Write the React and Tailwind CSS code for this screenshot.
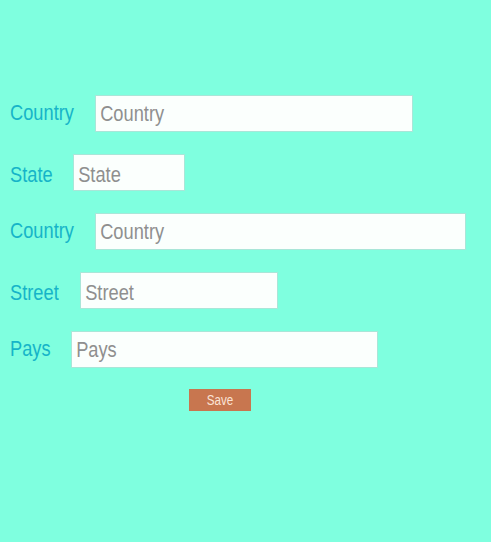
import React from "react";

const rows = [
  { label: "Country", lw: "w-[85px]", w: "w-[318px]", iw: "w-[381px]", lo: "", io: "" },
  { label: "State", lw: "w-[63px]", w: "w-[112px]", iw: "w-[133px]", lo: "translate-y-[3px]", io: "pt-[5px]" },
  { label: "Country", lw: "w-[85px]", w: "w-[371px]", iw: "w-[445px]", lo: "", io: "" },
  { label: "Street", lw: "w-[70px]", w: "w-[198px]", iw: "w-[236px]", lo: "translate-y-[3px]", io: "pt-[5px]" },
  { label: "Pays", lw: "w-[61px]", w: "w-[307px]", iw: "w-[368px]", lo: "", io: "" },
];

export default function App() {
  return (
    <div className="min-h-[542px] w-full bg-[#7fffdf] pt-[95px] pl-[10px] font-['Liberation_Sans',Arial,sans-serif]">
      <div className="flex flex-col gap-[22px]">
        {rows.map((r, i) => (
          <div key={i} className="flex items-center h-[37px]">
            <div className={`${r.lw} shrink-0 ${r.lo}`}>
              <span className="inline-block origin-left scale-x-[0.83] text-[22px] leading-[26px] text-[#16b4c8] whitespace-nowrap">
                {r.label}
              </span>
            </div>
            <div className={`${r.w} h-[37px] shrink-0 overflow-hidden bg-[#fbfffd] border border-[#a9e6d8]`}>
              <input
                placeholder={r.label}
                className={`${r.iw} h-[35px] origin-left scale-x-[0.83] bg-transparent px-[5px] ${r.io} text-[22px] text-[#777] placeholder:text-[#8f8f8f] outline-none`}
              />
            </div>
          </div>
        ))}
      </div>
      <div className="mt-[21px] pl-[179px] flex">
        <button className="w-[62px] h-[22px] bg-[#c8764f] text-[#fbe3d6] flex items-center justify-center">
          <span className="inline-block scale-x-[0.83] text-[14px] leading-[22px]">Save</span>
        </button>
      </div>
    </div>
  );
}
